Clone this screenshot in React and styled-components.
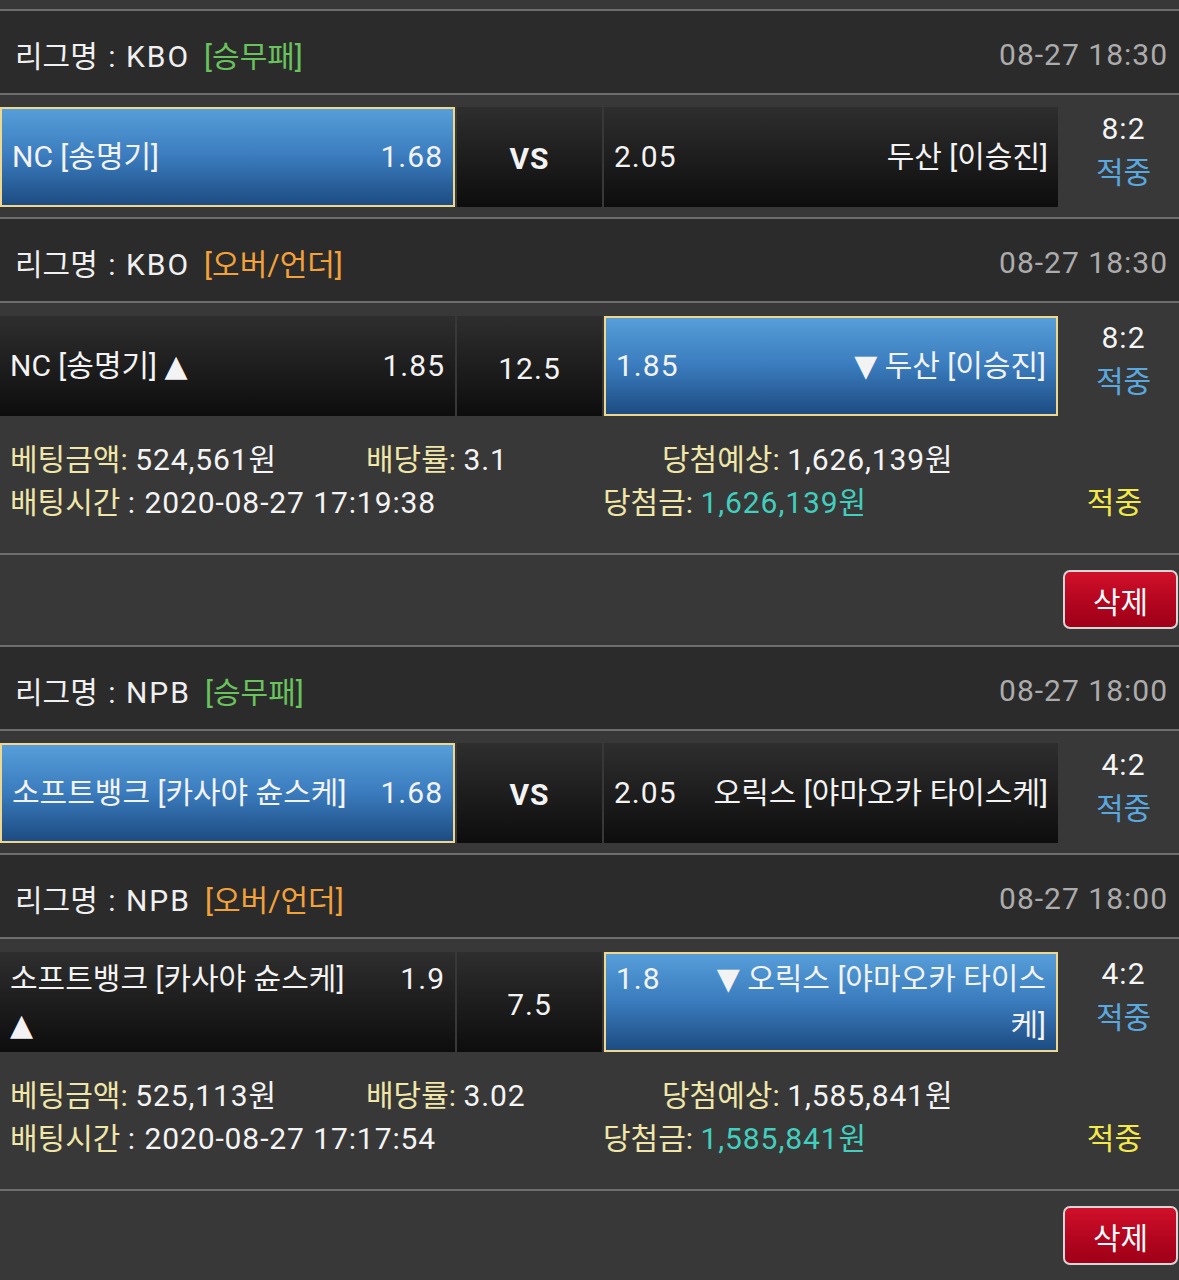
import React from 'react';
import styled, { createGlobalStyle, css } from 'styled-components';

const Global = createGlobalStyle`
  html, body { margin: 0; padding: 0; background: #383838; }
  body {
    font-family: Roboto, "DejaVu Sans", "Noto Sans CJK KR", sans-serif;
    color: #f3f3f3;
  }
  * { box-sizing: border-box; }
`;

const Page = styled.div`
  width: 1179px;
  padding-top: 9px;
  font-size: 30px;
`;

const Card = styled.section``;

const Rule = styled.div`
  height: 2px;
  background: #6e6e6e;
`;

const LeagueHeader = styled.div`
  height: 82px;
  background: #2b2b2b;
  display: flex;
  align-items: center;
  justify-content: space-between;
  padding: 4px 11px 0 15px;
`;

const LeagueName = styled.span`
  color: #f0f0f0;
  word-spacing: 3px;
`;

const Code = styled.span`
  letter-spacing: 2px;
`;

const Market = styled.span`
  margin-left: 14px;
  color: ${(p) => (p.$type === 'ou' ? '#f3a23a' : '#69c35c')};
`;

const Kickoff = styled.span`
  color: #acacac;
  letter-spacing: 1px;
`;

const MatchRow = styled.div`
  display: grid;
  grid-template-columns: 455px 145px 454px 1fr;
  column-gap: 2px;
  padding: ${(p) => (p.$last ? '13px 0 0' : '12px 0 10px')};
`;

const Pick = styled.div`
  height: 100px;
  display: flex;
  align-items: center;
  padding: 0 10px;
  ${(p) =>
    p.$selected
      ? css`
          background: linear-gradient(180deg, #569ed9 0%, #3a7bbd 50%, #1d4c82 100%);
          border: 2px solid #efd88e;
        `
      : css`
          background: linear-gradient(180deg, #2e2e2e 0%, #1c1c1c 55%, #0d0d0d 100%);
        `}
`;

const PickInner = styled.div`
  width: 100%;
  display: flex;
  align-items: flex-start;
  flex-direction: ${(p) => (p.$side === 'away' ? 'row-reverse' : 'row')};
  line-height: 46px;
`;

const TeamName = styled.span`
  flex: 1 1 auto;
  min-width: 0;
  text-align: ${(p) => (p.$side === 'away' ? 'right' : 'left')};
`;

const Odds = styled.span`
  flex: none;
  letter-spacing: 1px;
  ${(p) => (p.$side === 'away' ? 'margin-right: 32px;' : 'margin-left: 32px;')}
`;

const Middle = styled.div`
  height: 100px;
  display: flex;
  align-items: center;
  justify-content: center;
  padding-top: ${(p) => (p.$vs ? '2px' : '4px')};
  background: linear-gradient(180deg, #2e2e2e 0%, #1c1c1c 55%, #0d0d0d 100%);
  font-weight: ${(p) => (p.$vs ? 700 : 400)};
  letter-spacing: 1px;
`;

const Result = styled.div`
  display: flex;
  flex-direction: column;
  align-items: center;
  padding-left: 8px;
  line-height: 44px;
`;

const Score = styled.span`
  color: #f5f5f5;
  letter-spacing: 1px;
`;

const Outcome = styled.span`
  color: #59a8e0;
`;

const Details = styled.div`
  height: 137px;
  padding: 22px 0 0 10px;
  line-height: 43px;
`;

const DetailLine = styled.div`
  display: flex;
`;

const Field = styled.span`
  flex: none;
  width: ${(p) => (p.$w ? `${p.$w}px` : 'auto')};
`;

const Label = styled.span`
  color: #efe6a8;
`;

const Value = styled.span`
  color: ${(p) => (p.$teal ? '#41cfbf' : '#f4f4f4')};
  letter-spacing: 0.9px;
`;

const Hit = styled.span`
  margin-left: auto;
  margin-right: 37px;
  color: #f3ea4a;
`;

const Actions = styled.div`
  height: 90px;
  display: flex;
  justify-content: flex-end;
  align-items: flex-start;
  padding: 15px 1px 0 0;
`;

const DeleteButton = styled.button`
  width: 115px;
  height: 59px;
  border: 2px solid #d6d6d6;
  border-radius: 7px;
  background: linear-gradient(180deg, #d1102a 0%, #b3051f 55%, #9f0018 100%);
  color: #ffffff;
  font: inherit;
  font-size: 30px;
  padding: 0;
  cursor: pointer;
`;

const cards = [
  {
    league: 'KBO',
    kickoff: '08-27 18:30',
    matches: [
      {
        market: '1x2',
        home: 'NC [송명기]',
        homeOdds: '1.68',
        mid: 'VS',
        awayOdds: '2.05',
        away: '두산 [이승진]',
        pick: 'home',
        score: '8:2',
      },
      {
        market: 'ou',
        home: 'NC [송명기] ▲',
        homeOdds: '1.85',
        mid: '12.5',
        awayOdds: '1.85',
        away: '▼ 두산 [이승진]',
        pick: 'away',
        score: '8:2',
      },
    ],
    amount: '524,561원',
    rate: '3.1',
    expected: '1,626,139원',
    placed: '2020-08-27 17:19:38',
    won: '1,626,139원',
  },
  {
    league: 'NPB',
    kickoff: '08-27 18:00',
    matches: [
      {
        market: '1x2',
        home: '소프트뱅크 [카사야 슌스케]',
        homeOdds: '1.68',
        mid: 'VS',
        awayOdds: '2.05',
        away: '오릭스 [야마오카 타이스케]',
        pick: 'home',
        score: '4:2',
      },
      {
        market: 'ou',
        home: '소프트뱅크 [카사야 슌스케] ▲',
        homeOdds: '1.9',
        mid: '7.5',
        awayOdds: '1.8',
        away: '▼ 오릭스 [야마오카 타이스케]',
        pick: 'away',
        score: '4:2',
      },
    ],
    amount: '525,113원',
    rate: '3.02',
    expected: '1,585,841원',
    placed: '2020-08-27 17:17:54',
    won: '1,585,841원',
  },
];

function Match({ league, kickoff, m, last }) {
  return (
    <>
      <Rule />
      <LeagueHeader>
        <LeagueName>
          리그명 : <Code>{league}</Code>
          <Market $type={m.market}>{m.market === 'ou' ? '[오버/언더]' : '[승무패]'}</Market>
        </LeagueName>
        <Kickoff>{kickoff}</Kickoff>
      </LeagueHeader>
      <Rule />
      <MatchRow $last={last}>
        <Pick $selected={m.pick === 'home'}>
          <PickInner $side="home">
            <TeamName $side="home">{m.home}</TeamName>
            <Odds $side="home">{m.homeOdds}</Odds>
          </PickInner>
        </Pick>
        <Middle $vs={m.mid === 'VS'}>{m.mid}</Middle>
        <Pick $selected={m.pick === 'away'}>
          <PickInner $side="away">
            <TeamName $side="away">{m.away}</TeamName>
            <Odds $side="away">{m.awayOdds}</Odds>
          </PickInner>
        </Pick>
        <Result>
          <Score>{m.score}</Score>
          <Outcome>적중</Outcome>
        </Result>
      </MatchRow>
    </>
  );
}

function BetCard({ card }) {
  return (
    <Card>
      {card.matches.map((m, i) => (
        <Match
          key={i}
          league={card.league}
          kickoff={card.kickoff}
          m={m}
          last={i === card.matches.length - 1}
        />
      ))}
      <Details>
        <DetailLine>
          <Field $w={356}>
            <Label>베팅금액:</Label> <Value>{card.amount}</Value>
          </Field>
          <Field $w={296}>
            <Label>배당률:</Label> <Value>{card.rate}</Value>
          </Field>
          <Field>
            <Label>당첨예상:</Label> <Value>{card.expected}</Value>
          </Field>
        </DetailLine>
        <DetailLine>
          <Field $w={593}>
            <Label>배팅시간</Label> <Value>: {card.placed}</Value>
          </Field>
          <Field>
            <Label>당첨금:</Label> <Value $teal>{card.won}</Value>
          </Field>
          <Hit>적중</Hit>
        </DetailLine>
      </Details>
      <Rule />
      <Actions>
        <DeleteButton type="button">삭제</DeleteButton>
      </Actions>
    </Card>
  );
}

export default function App() {
  return (
    <>
      <Global />
      <Page>
        {cards.map((c, i) => (
          <BetCard key={i} card={c} />
        ))}
      </Page>
    </>
  );
}
